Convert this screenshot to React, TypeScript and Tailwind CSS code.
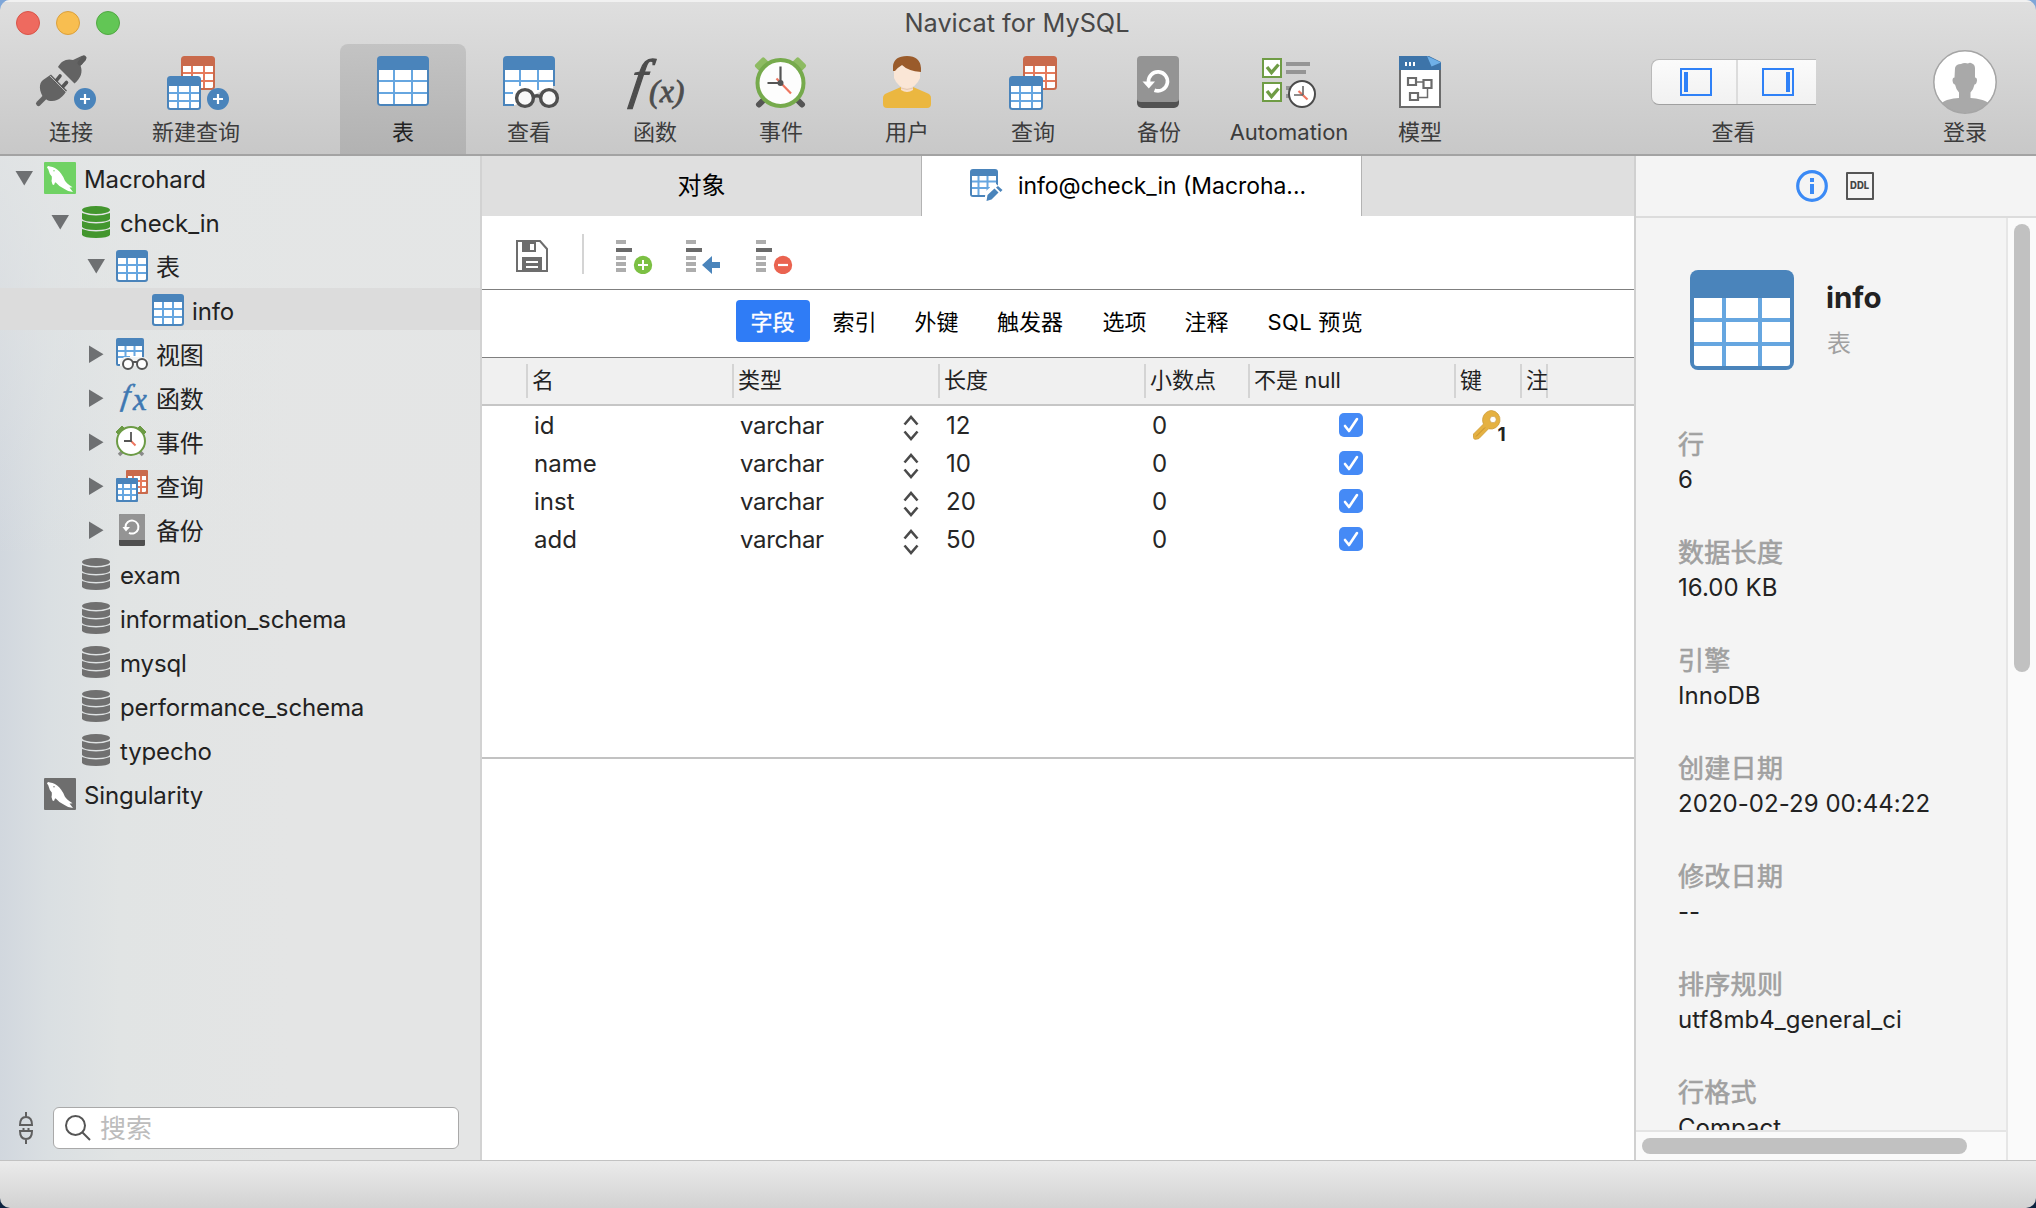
import React from "react";

type Box = { x?: number; y?: number };

/* ---------- shared drawings ---------- */

const BLUE = "#4a84bb";
const BLUE_LINE = "#66a6e0";
const RED = "#c96a4c";
const RED_LINE = "#e57a5c";

type GridProps = Box & {
  w: number;
  h: number;
  head: number;
  cols: [number, number];
  rows: [number, number];
  r?: number;
  b?: number;
  color?: string;
  line?: string;
};

function Grid({ x = 0, y = 0, w, h, head, cols, rows, r = 3, b = 2, color = BLUE, line = BLUE_LINE }: GridProps) {
  return (
    <g transform={`translate(${x} ${y})`}>
      <rect width={w} height={h} rx={r} fill={color} />
      <path
        d={`M${b} ${head}H${w - b}V${h - b - 1.5}Q${w - b} ${h - b} ${w - b - 1.5} ${h - b}H${b + 1.5}Q${b} ${h - b} ${b} ${h - b - 1.5}Z`}
        fill="#fff"
      />
      {cols.map((c) => (
        <rect key={c} x={c} y={head} width={2} height={h - b - head} fill={line} />
      ))}
      {rows.map((c) => (
        <rect key={c} x={b} y={c} width={w - 2 * b} height={2} fill={line} />
      ))}
    </g>
  );
}

const LargeGrid = (p: Box) => <Grid {...p} w={52} h={50} head={14} cols={[16, 34]} rows={[24, 36]} r={4} />;

function QueryPair({ x }: { x: number }) {
  return (
    <>
      <Grid x={x + 14} y={12} w={34} h={34} head={10} cols={[10, 22]} rows={[16, 24]} color={RED} line={RED_LINE} r={3.5} />
      <Grid x={x} y={32} w={34} h={34} head={10} cols={[10, 22]} rows={[16, 24]} r={3.5} />
    </>
  );
}

function PlusBadge({ cx, cy }: { cx: number; cy: number }) {
  return (
    <>
      <circle cx={cx} cy={cy} r={11} fill={BLUE} />
      <path d={`M${cx - 5} ${cy}h10M${cx} ${cy - 5}v10`} stroke="#fff" strokeWidth={2.2} />
    </>
  );
}

/* ---------- main toolbar icons: 66px tall canvas over the whole item width ---------- */

const ConnectIcon = () => (
  <svg width={142} height={66} viewBox="0 0 142 66" className="block">
    <g fill="#636363">
      <path d="M58 23C61 17 67 14 73 16L82 11.8L83.5 12L86 15L85.5 16.5L80.5 21.5C83 28 81 34 74.5 39.5Z" />
      <path d="M80 19L84 14" stroke="#5a5a5a" strokeWidth={5} strokeLinecap="round" />
      <path d="M51 30.5L67 46.5C63 52 58 59 48 56.5L44 54C39 48 38.500 39 43 36Z" />
      <path d="M38.500 59.500L44 54" stroke="#636363" strokeWidth={5} strokeLinecap="round" />
      <path d="M56 37L60 32M62.500 43L66.500 38.500" stroke="#555" strokeWidth={3.6} strokeLinecap="round" />
    </g>
    <path d="M50 32L66 48" stroke="#d0d0d0" strokeWidth={0.8} />
    <PlusBadge cx={85} cy={55} />
  </svg>
);

const NewQueryIcon = () => (
  <svg width={108} height={66} viewBox="142 0 108 66" className="block">
    <QueryPair x={167} />
    <PlusBadge cx={218} cy={55} />
  </svg>
);

const TableToolIcon = () => (
  <svg width={126} height={66} viewBox="0 0 126 66" className="block">
    <LargeGrid x={37} y={12} />
  </svg>
);

const ViewIcon = () => (
  <svg width={126} height={66} viewBox="0 0 126 66" className="block">
    <path d="M37 16q0-4 4-4h44q4 0 4 4v26h-2V26H39v34h8v2h-7q-3 0-3-3z" fill={BLUE} />
    <path d="M39 26h48v19l-8 0l-30 16h-10z" fill="#fff" />
    <path d="M39 37h48M54 26v16M72 26v20M39 49h8" stroke={BLUE_LINE} strokeWidth={2} />
    <path d="M38 25v36h10" fill="none" stroke={BLUE} strokeWidth={2} />
    <circle cx={59} cy={54} r={8.400} fill="#f8f8f8" stroke="#4f4f4f" strokeWidth={3.400} />
    <circle cx={83} cy={54} r={8.400} fill="#f8f8f8" stroke="#4f4f4f" strokeWidth={3.400} />
    <path d="M67 53q4-2.500 8 0" fill="none" stroke="#4f4f4f" strokeWidth={3.400} />
  </svg>
);

const FunctionIcon = () => (
  <svg width={126} height={66} viewBox="0 0 126 66" className="block">
    <g fill="#4d4d4d" stroke="#4d4d4d" fontFamily="Liberation Serif" fontStyle="italic">
      <text transform="translate(37 52.500) skewX(-9)" fontSize={54} strokeWidth={1.4}>f</text>
      <text x={57} y={58} fontSize={32} strokeWidth={0.8}>(x)</text>
    </g>
  </svg>
);

const EventIcon = () => (
  <svg width={126} height={66} viewBox="0 0 126 66" className="block">
    <path d="M41 60.500L48 53.500M84 60.500L77 53.500" stroke="#555" strokeWidth={6} strokeLinecap="round" />
    <g fill="#8ebb62">
      <rect x={-6.500} y={-4} width={13} height={9} rx={2} transform="translate(43.500 20) rotate(-45)" />
      <rect x={-6.500} y={-4} width={13} height={9} rx={2} transform="translate(81.500 20) rotate(45)" />
    </g>
    <circle cx={62.500} cy={39} r={23} fill="#fdfdfd" stroke="#76aa4c" strokeWidth={4} />
    <path d="M58.500 34.500L73 49.500" stroke="#ee7660" strokeWidth={2.200} />
    <path d="M62.500 22.500V39H49.500" fill="none" stroke="#555" strokeWidth={2.200} />
    <circle cx={62.500} cy={39} r={3} fill="#555" />
  </svg>
);

const UserIcon = () => (
  <svg width={126} height={66} viewBox="0 0 126 66" className="block">
    <path d="M39 54q0-3 3-4.500L57 43h12l15 6.500q3 1.500 3 4.500v6q0 4-4 4H43q-4 0-4-4z" fill="#ebb740" />
    <path d="M57 43v3q6 4 12 0v-3z" fill="#f8dfcb" />
    <path d="M50 26V34Q54 44 63 44T76 34V26L60 20z" fill="#fae6d6" />
    <path d="M57 44q6 3 12 0" fill="none" stroke="#e3c9b4" strokeWidth={1} />
    <path d="M49 27V22Q50 12 63 12T77 24V28Q64 27 58 21Q53 24 51 27z" fill="#9a5b2b" />
  </svg>
);

const QueryIcon = () => (
  <svg width={126} height={66} viewBox="970 0 126 66" className="block">
    <QueryPair x={1009} />
  </svg>
);

const BackupIcon = () => (
  <svg width={126} height={66} viewBox="0 0 126 66" className="block">
    <rect x={41} y={14} width={42} height={50} rx={5} fill="#525252" />
    <path d="M41 16q0-4 4-4h34q4 0 4 4v39q0 3-4 3H45q-4 0-4-3z" fill="#949494" />
    <path d="M52.500 38A9.500 9.500 0 1 1 58.500 46.200" fill="none" stroke="#fff" strokeWidth={3.600} />
    <path d="M46.500 37.500H59L52.800 44.500z" fill="#fff" />
  </svg>
);

const AutomationIcon = () => (
  <svg width={134} height={66} viewBox="0 0 134 66" className="block">
    {[15, 39].map((y) => (
      <g key={y}>
        <rect x={41} y={y} width={18} height={18} fill="#fff" stroke="#6f9c45" strokeWidth={2} />
        <path d={`M45 ${y + 8}l4.500 5.500l7-8`} fill="none" stroke="#6f9c45" strokeWidth={3.400} />
      </g>
    ))}
    <path d="M64 20h24M64 28h20M64 44h8M64 52h8" stroke="#959595" strokeWidth={4} />
    <circle cx={80} cy={50} r={13} fill="#fff" stroke="#4b4b4b" strokeWidth={2} />
    <path d="M76.500 47L85.500 55.500" stroke="#ee7660" strokeWidth={2.200} />
    <path d="M81 42v9M72 51h9" stroke="#666" strokeWidth={1.600} />
  </svg>
);

const ModelIcon = () => (
  <svg width={128} height={66} viewBox="0 0 128 66" className="block">
    <path d="M43 12h28l14 7v45H43z" fill="#fff" />
    <path d="M44 26v37h40V26" fill="none" stroke="#6b6b6b" strokeWidth={2} />
    <path d="M43 12h30l12 6v8H43z" fill="#3d74a9" />
    <path d="M71 12L85 18.500L75.500 22.500z" fill="#6fb0e8" />
    <path d="M50 18v4M54 18v4M58 18v4" stroke="#fff" strokeWidth={2} />
    <g fill="none" stroke="#6b6b6b" strokeWidth={2.200}>
      <path d="M52 34h8v7h-8zM67.500 36h8v8h-8zM54 49h8v7h-8z" />
      <path d="M60 38h7M62 53.500h9.500V44" strokeWidth={1.500} />
    </g>
  </svg>
);

/* ---------- tree icons: 32x32 ---------- */

const SmallTable = () => (
  <svg width={32} height={32} className="shrink-0">
    <Grid w={32} h={32} head={8} cols={[10, 20]} rows={[14, 22]} r={3} />
  </svg>
);

const SmallView = () => (
  <svg width={32} height={32} className="shrink-0">
    <path d="M0 2q0-2 2-2h24q2 0 2 2v18l-22 2v6H2q-2 0-2-2z" fill={BLUE} />
    <path d="M2 8h24v12l-12 0l-8 6H2z" fill="#fff" />
    <path d="M2 13h24M2 19h12M9.500 8v10M18.500 8v10" stroke={BLUE_LINE} strokeWidth={2} />
    <path d="M4 28v-5l4-4h18q4 0 6 3v6z" fill="#f2f3f3" />
    <g fill="#fff" stroke="#555" strokeWidth={2}>
      <circle cx={12} cy={26} r={5} />
      <circle cx={26} cy={26} r={5} />
      <path d="M16.500 24h5" />
    </g>
  </svg>
);

const SmallFunction = () => (
  <svg width={32} height={32} className="shrink-0 overflow-visible">
    <g fill="#3e78b2" stroke="#3e78b2" strokeWidth={0.6} fontFamily="Liberation Serif" fontStyle="italic">
      <text transform="translate(4.500 22.500) skewX(-8)" fontSize={30}>f</text>
      <text x={17} y={27.500} fontSize={31}>x</text>
    </g>
  </svg>
);

const SmallEvent = () => (
  <svg width={32} height={32} className="shrink-0">
    <path d="M3 29l4-4M27 29l-4-4" stroke="#8a8a8a" strokeWidth={3.500} />
    <path d="M0 6L6 0L9 3L3 9zM30 6L24 0L21 3L27 9z" fill="#6c9b45" stroke="#6c9b45" strokeLinejoin="round" />
    <circle cx={15} cy={15} r={14} fill="#fff" stroke="#6c9b45" strokeWidth={2} />
    <path d="M14 14l5.500 5.500" stroke="#ee7660" strokeWidth={2} />
    <path d="M15 6v9H8" fill="none" stroke="#555" strokeWidth={1.800} />
  </svg>
);

const SmallQuery = () => (
  <svg width={32} height={32} className="shrink-0">
    <Grid x={10} y={0} w={22} h={24} head={6} cols={[6, 14]} rows={[10, 16]} r={1} color={RED} line={RED_LINE} />
    <Grid x={0} y={8} w={22} h={24} head={6} cols={[6, 14]} rows={[10, 16]} r={1} />
  </svg>
);

const SmallBackup = () => (
  <svg width={32} height={32} className="shrink-0">
    <rect x={3} y={0} width={26} height={32} rx={1.500} fill="#4f4f4f" />
    <path d="M3 1.500q0-1.500 1.500-1.500h23q1.500 0 1.500 1.500V26H3z" fill="#949494" />
    <path d="M9.500 13A6.500 6.500 0 1 1 13 18.800" fill="none" stroke="#fff" strokeWidth={2} />
    <path d="M6.500 13h7.500l-4 4.500z" fill="#fff" />
  </svg>
);

const Database = ({ color }: { color: string }) => (
  <svg width={32} height={32} className="shrink-0" fill={color}>
    <ellipse cx={16} cy={4} rx={14} ry={4} />
    <path d="M2 7q14 5 28 0v6q-2 3-14 3t-14-3z" />
    <path d="M2 15q14 5 28 0v6q-2 3-14 3t-14-3z" />
    <path d="M2 23q14 5 28 0v6q-2 3-14 3t-14-3z" />
  </svg>
);

const Dolphin = ({ color }: { color: string }) => (
  <svg width={32} height={32} className="shrink-0">
    <rect width={32} height={32} rx={1} fill={color} />
    <path
      d="M3 5.500Q3.500 3 6 4.500L8.500 5Q13.500 6.500 17 11.500Q20 15.500 20.800 18.500Q22 21 28.500 25.200Q26.500 25.300 25.500 25.600L29 30Q23.500 29.500 20.500 27Q15.500 25 11.800 20.500L11 20.500L10 23L8.500 22.500L7.500 19Q8 16.500 7.800 14.500Q5.500 12.500 5 9.500Q4.500 7 3 5.500Z"
      fill="#fff"
    />
    <circle cx={10} cy={8.800} r={0.7} fill={color} />
  </svg>
);

/* ---------- window header ---------- */

function ToolItem({ w, label, active, children }: { w: string; label: string; active?: boolean; children: React.ReactNode }) {
  return (
    <div
      className={`${w} flex h-[110px] shrink-0 flex-col items-center text-[22px] leading-[45px] *:shrink-0 ${
        active ? "rounded-t-lg bg-gradient-to-b from-[#c3c3c3] to-[#b2b2b2] text-[#222]" : "text-[#3c3c3c]"
      }`}
    >
      {children}
      <span className="whitespace-nowrap">{label}</span>
    </div>
  );
}

function Header() {
  return (
    <header className="flex h-[156px] shrink-0 flex-col border-b-2 border-[#a3a3a3] bg-gradient-to-b from-[#dfdfdf] to-[#c8c8c8] shadow-[inset_0_2px_0_#f1f1f1]">
      <div className="grid h-11 grid-cols-[1fr_auto_1fr] items-center">
        <div className="flex gap-4 pl-4">
          <i className="size-6 rounded-full border border-[#d95448] bg-[#ee6a5f]" />
          <i className="size-6 rounded-full border border-[#dba03c] bg-[#f8be50]" />
          <i className="size-6 rounded-full border border-[#51a843] bg-[#62c655]" />
        </div>
        <h1 className="pt-px pr-0.5 text-[25.300px] leading-[44px] text-[#484848]">Navicat for MySQL</h1>
      </div>
      <div className="flex">
        <ToolItem w="w-[142px]" label="连接"><ConnectIcon /></ToolItem>
        <ToolItem w="w-[108px]" label="新建查询"><NewQueryIcon /></ToolItem>
        <div className="w-[90px]" />
        <ToolItem w="w-[126px]" label="表" active><TableToolIcon /></ToolItem>
        <ToolItem w="w-[126px]" label="查看"><ViewIcon /></ToolItem>
        <ToolItem w="w-[126px]" label="函数"><FunctionIcon /></ToolItem>
        <ToolItem w="w-[126px]" label="事件"><EventIcon /></ToolItem>
        <ToolItem w="w-[126px]" label="用户"><UserIcon /></ToolItem>
        <ToolItem w="w-[126px]" label="查询"><QueryIcon /></ToolItem>
        <ToolItem w="w-[126px]" label="备份"><BackupIcon /></ToolItem>
        <ToolItem w="w-[134px]" label="Automation"><AutomationIcon /></ToolItem>
        <ToolItem w="w-[128px]" label="模型"><ModelIcon /></ToolItem>
        <div className="flex-1" />
        <ToolItem w="w-[165px]" label="查看">
          <div className="flex h-[66px] w-full pt-[15px]">
            <div className="flex h-[46px] w-full overflow-hidden rounded-l-lg border border-r-0 border-[#b9b9b9] border-b-[#a0a0a0] bg-gradient-to-b from-[#fbfbfb] to-[#f1f1f1]">
              <div className="flex w-[86px] items-center border-r-2 border-[#dcdcdc] pl-7">
                <svg width={32} height={28}><path d="M1 1h30v26H1z" fill="none" stroke="#2f81f7" strokeWidth={2} /><path d="M4 4h4v20H4z" fill="#2f81f7" /></svg>
              </div>
              <div className="flex items-center pl-6">
                <svg width={32} height={28}><path d="M1 1h30v26H1z" fill="none" stroke="#2f81f7" strokeWidth={2} /><path d="M24 4h4v20h-4z" fill="#2f81f7" /></svg>
              </div>
            </div>
          </div>
        </ToolItem>
        <div className="w-[99px]" />
        <ToolItem w="w-[100px]" label="登录">
          <svg width={100} height={66} viewBox="0 0 100 66" className="block overflow-visible">
            <clipPath id="avatar"><circle cx={50} cy={38} r={31} /></clipPath>
            <circle cx={50} cy={38} r={31} fill="#fff" />
            <path
              d="M40 24q1-4 6-4q3-1.500 7-.5q2-1.500 4 0q3 1 3 5v9q2 0 2 3q-.5 4-2.500 4q-1 5-4 8v5.500q5 0 12 2q6 2 6 4v10H26V60q1-2 6-4q7-2 12-2v-5.500q-3-3-4-8q-2 0-2.500-4q0-3 2-3z"
              fill="#a9a9a9"
              clipPath="url(#avatar)"
            />
            <circle cx={50} cy={38} r={31.200} fill="none" stroke="#a5a5a5" strokeWidth={1.500} />
          </svg>
        </ToolItem>
        <div className="w-[21px]" />
      </div>
    </header>
  );
}

/* ---------- sidebar ---------- */

type Arrow = "down" | "right" | null;

const TREE: { label: string; pad: string; arrow: Arrow; icon: React.ReactNode; selected?: boolean }[] = [
  { label: "Macrohard", pad: "pl-2", arrow: "down", icon: <Dolphin color="#70d264" /> },
  { label: "check_in", pad: "pl-11", arrow: "down", icon: <Database color="#43962e" /> },
  { label: "表", pad: "pl-20", arrow: "down", icon: <SmallTable /> },
  { label: "info", pad: "pl-[116px]", arrow: null, icon: <SmallTable />, selected: true },
  { label: "视图", pad: "pl-20", arrow: "right", icon: <SmallView /> },
  { label: "函数", pad: "pl-20", arrow: "right", icon: <SmallFunction /> },
  { label: "事件", pad: "pl-20", arrow: "right", icon: <SmallEvent /> },
  { label: "查询", pad: "pl-20", arrow: "right", icon: <SmallQuery /> },
  { label: "备份", pad: "pl-20", arrow: "right", icon: <SmallBackup /> },
  { label: "exam", pad: "pl-11", arrow: null, icon: <Database color="#707070" /> },
  { label: "information_schema", pad: "pl-11", arrow: null, icon: <Database color="#707070" /> },
  { label: "mysql", pad: "pl-11", arrow: null, icon: <Database color="#707070" /> },
  { label: "performance_schema", pad: "pl-11", arrow: null, icon: <Database color="#707070" /> },
  { label: "typecho", pad: "pl-11", arrow: null, icon: <Database color="#707070" /> },
  { label: "Singularity", pad: "pl-2", arrow: null, icon: <Dolphin color="#6e6e6e" /> },
];

function Sidebar() {
  return (
    <aside className="flex w-[482px] shrink-0 flex-col border-r-2 border-[#d2d2d2] bg-[linear-gradient(to_bottom,#e4e6e6cc,transparent_40%),linear-gradient(to_right,#d1d7de,#dadfe2_10%,#e1e4e4_25%,#e4e5e5_60%)]">
      <ul className="flex-1 text-2xl text-[#222]">
        {TREE.map((n) => (
          <li key={n.label + n.pad} className="h-11">
            <div className={`flex h-[42px] items-center pt-0.5 ${n.pad} ${n.selected ? "bg-[#dcdcdc]" : ""}`}>
              <svg width={36} height={32} className="shrink-0" fill="#6e7072">
                {n.arrow === "down" && <path d="M7.500 9h17.500l-8.750 14.500z" />}
                {n.arrow === "right" && <path d="M9 7.500v17.500l14.500-8.750z" />}
              </svg>
              {n.icon}
              <span className="pt-[3px] pl-2 leading-8 tracking-[-0.13px]">{n.label}</span>
            </div>
          </li>
        ))}
      </ul>
      <div className="mb-[11px] flex h-[42px] items-center pl-[19px]">
        <svg width={14} height={32} fill="none" stroke="#5f5f5f" strokeWidth={2}>
          <path d="M7 0v5M1 13h12q0-8-6-8T1 13zM4.500 19v-3M9.500 19v-3M1 19h12q0 8-6 8T1 19zM7 27v5" />
        </svg>
        <div className="ml-5 flex h-[42px] w-[406px] items-center rounded-md border border-[#a9a9a9] bg-white pl-[11px]">
          <svg width={26} height={26} fill="none" stroke="#555" strokeWidth={2}>
            <circle cx={10.500} cy={10.500} r={9.500} />
            <path d="M17.500 17.500l7.500 7.500" />
          </svg>
          <span className="pt-0.5 pl-[9px] text-[26px] leading-8 text-[#bcbcbc]">搜索</span>
        </div>
      </div>
    </aside>
  );
}

/* ---------- editor ---------- */

const FieldRows = () => (
  <g>
    <path d="M0 2h10M0 18h10M0 24h10M0 30h10" stroke="#adadad" strokeWidth={4} />
    <path d="M0 10h16" stroke="#6a6a6a" strokeWidth={4} />
  </g>
);

function EditorToolbar() {
  return (
    <div className="flex h-[74px] items-center border-b border-[#7f7f7f] pt-[3px] pl-[34px]">
      <svg width={32} height={32} className="mt-1 block" fill="none" stroke="#6d6d6d">
        <path d="M1 1h23l7 8v22H1z" strokeWidth={2} />
        <path d="M6 1h14v11H6zM6 17h20v14H6z" fill="#6d6d6d" stroke="none" />
        <path d="M14 4h4v6h-4zM10 21h12v2H10zM10 26h12v2H10z" fill="#fff" stroke="none" />
      </svg>
      <i className="mr-8 ml-[34px] h-10 w-0.5 bg-[#d4d4d4]" />
      <div className="flex gap-8 pt-1.5">
        <svg width={38} height={34}>
          <FieldRows />
          <circle cx={27} cy={25} r={9.200} fill="#7cc043" />
          <path d="M22 25h10M27 20v10" stroke="#fff" strokeWidth={2} />
        </svg>
        <svg width={38} height={34}>
          <FieldRows />
          <path d="M16 25l10-9v6h8v6h-8v6z" fill={BLUE} />
        </svg>
        <svg width={38} height={34}>
          <FieldRows />
          <circle cx={27} cy={25} r={9.200} fill="#ea6350" />
          <path d="M22 25h10" stroke="#fff" strokeWidth={2.200} />
        </svg>
      </div>
    </div>
  );
}

const COLS = "grid grid-cols-[46px_206px_206px_206px_104px_206px_66px_26px_1fr]";

const SECTIONS = [
  { label: "索引", cls: "pr-[14.500px] pl-[13.500px]" },
  { label: "外键", cls: "px-[14.500px]" },
  { label: "触发器", cls: "pr-[16px] pl-[15px]" },
  { label: "选项", cls: "px-[14.500px]" },
  { label: "注释", cls: "px-[14.500px]" },
  { label: "SQL 预览", cls: "pl-[15.500px] tracking-[0.3px]" },
];

const FIELDS = [
  { name: "id", len: "12", key: true },
  { name: "name", len: "10", key: false },
  { name: "inst", len: "20", key: false },
  { name: "add", len: "50", key: false },
];

function KeyMark() {
  return (
    <svg width={40} height={36} viewBox="0 0 40 36" className="absolute top-[3px] left-4 overflow-visible">
      <path
        d="M19.500 1.500a9.300 9.300 0 1 1-3 18.300L7 29.500q-5.500 2-5.500-1V25L11.500 15A9.500 9.500 0 0 1 19.500 1.500z"
        fill="#e5b141"
        stroke="#cd9a35"
        strokeWidth={0.8}
      />
      <path d="M4 27.500L13 18.500" stroke="#c08a2a" strokeWidth={0.9} />
      <circle cx={21} cy={10.500} r={3.200} fill="#fff" stroke="#c4943a" strokeWidth={0.6} />
      <text x={25.500} y={32} fontFamily="Inter" fontWeight={700} fontSize={19} fill="#222">1</text>
    </svg>
  );
}

function Editor() {
  return (
    <main className="flex w-[1152px] shrink-0 flex-col bg-white text-black">
      <div className="flex h-[60px] text-2xl">
        <div className="flex w-[440px] items-center justify-center border-r border-[#b3b3b3] bg-[#dfdfdf]">对象</div>
        <div className="flex w-[439px] items-center pl-12">
          <svg width={34} height={34}>
            <path d="M0 3q0-3 3-3h22q3 0 3 3v14L16 28H3q-3 0-3-3z" fill={BLUE} />
            <path d="M2 7h24v12l-8 7H2z" fill="#fff" />
            <path d="M2 12.500h24M2 19h18M8.500 7v19M17.500 7v16" stroke={BLUE_LINE} strokeWidth={2} />
            <path d="M14 33l2-11l9-8l9 8l-6 8z" fill="#fff" />
            <path d="M16.500 32l1-6l7-6.500l4 4l-7 7z M26 18.500l2-1.500l4.500 4l-2 2z" fill={BLUE} />
          </svg>
          <span className="pl-[14px] text-[22.900px]">info@check_in (Macroha...</span>
        </div>
        <div className="flex-1 border-l border-[#b3b3b3] bg-[#dfdfdf]" />
      </div>
      <EditorToolbar />
      <nav className="flex h-[68px] items-center gap-[9px] border-b border-[#7f7f7f] pb-[5px] pl-[254px] text-[22px]">
        <span className="flex h-[42px] items-center rounded bg-[#2f7cf6] pt-0.5 pr-[15.500px] pl-[14.500px] text-white [-webkit-text-stroke:0.4px_#fff]">字段</span>
        {SECTIONS.map((s) => (
          <span key={s.label} className={`pt-0.5 whitespace-nowrap ${s.cls}`}>{s.label}</span>
        ))}
      </nav>
      <div className={`${COLS} h-12 border-b-2 border-[#c6c6c6] bg-[#f0f0f0] pt-1.5 text-[22px] leading-[32px] text-[#222]`}>
        {["", "名", "类型", "长度", "小数点", "不是 null", "键", "注", ""].map((t, i) => (
          <div key={i} className={`h-[34px] whitespace-nowrap ${i < 8 ? "border-r-2 border-[#d4d4d4]" : ""} pl-1`}>{t}</div>
        ))}
      </div>
      <div className="h-[353px] border-b-2 border-[#c2c2c2] text-2xl text-[#262626]">
        {FIELDS.map((f) => (
          <div key={f.name} className={`${COLS} h-[38px] leading-10`}>
            <span />
            <span className="pl-1.5">{f.name}</span>
            <span className="flex items-center justify-between pr-[21px] pl-1.5 tracking-[-0.3px]">
              varchar
              <svg width={16} height={26} className="mt-1" fill="none" stroke="#4a4a4a" strokeWidth={2.600}>
                <path d="M1.500 9.500L8 2l6.500 7.500M1.500 16.500L8 24l6.500-7.500" />
              </svg>
            </span>
            <span className="pl-1.5">{f.len}</span>
            <span className="pl-1.5">0</span>
            <span className="flex h-[38px] items-center justify-center pr-[5px]">
              <svg width={24} height={24}>
                <rect width={24} height={24} rx={5} fill="#458af6" />
                <path d="M6 13l4 5l8-12" fill="none" stroke="#fff" strokeWidth={2.600} strokeLinecap="round" strokeLinejoin="round" />
              </svg>
            </span>
            <span className="relative">{f.key && <KeyMark />}</span>
          </div>
        ))}
      </div>
    </main>
  );
}

/* ---------- information panel ---------- */

const INFO = [
  ["行", "6"],
  ["数据长度", "16.00 KB"],
  ["引擎", "InnoDB"],
  ["创建日期", "2020-02-29 00:44:22"],
  ["修改日期", "--"],
  ["排序规则", "utf8mb4_general_ci"],
  ["行格式", "Compact"],
];

function InfoPanel() {
  return (
    <section className="flex flex-1 flex-col border-l-2 border-[#d0d0d0] bg-[#f4f4f4]">
      <div className="flex h-[62px] items-center justify-center gap-[18px] border-b-2 border-[#dcdcdc] pr-0.5">
        <svg width={32} height={32}>
          <circle cx={16} cy={16} r={14.300} fill="none" stroke="#3b8af5" strokeWidth={3.200} />
          <path d="M14 8h4v4h-4zM14 14h4v10h-4z" fill="#3b8af5" />
        </svg>
        <div className="flex size-7 items-center justify-center rounded-[1px] border-2 border-[#555] text-[10.500px] leading-none font-extrabold text-[#444]">
          <span className="scale-x-90">DDL</span>
        </div>
      </div>
      <div className="flex h-[942px]">
        <div className="flex flex-1 flex-col">
          <div className="h-[914px] overflow-hidden border-b-2 border-[#e4e4e4]">
            <div className="flex pt-[52px] pl-[54px]">
              <svg width={104} height={100} viewBox="0 0 52 50"><LargeGrid /></svg>
              <div className="pt-[7px] pl-8">
                <div className="text-[29.500px] leading-10 font-bold text-[#222]">info</div>
                <div className="pt-[9px] pl-px text-2xl leading-9 text-[#a0a0a0]">表</div>
              </div>
            </div>
            <dl className="pt-[57px] pl-[42px]">
              {INFO.map(([k, v]) => (
                <div key={k} className="h-[108px]">
                  <dt className="text-[26px] leading-9 tracking-[0.3px] text-[#a0a0a0] [-webkit-text-stroke:0.6px_#a0a0a0]">{k}</dt>
                  <dd className="text-2xl leading-[34px] tracking-[0.05px] text-[#222]">{v}</dd>
                </div>
              ))}
            </dl>
          </div>
          <div className="flex flex-1 bg-[#fafafa] pt-1.5 pl-1.5">
            <i className="h-4 w-[325px] rounded-full bg-[#c1c1c1]" />
          </div>
        </div>
        <div className="w-[30px] border-l-2 border-[#e6e6e6] bg-[#fafafa] pt-1.5 pl-1.5">
          <i className="block h-[448px] w-4 rounded-full bg-[#c1c1c1]" />
        </div>
      </div>
    </section>
  );
}

export default function App() {
  return (
    <div className="h-[1208px] w-[2036px] overflow-hidden bg-[#12294a] bg-gradient-to-b from-[#7ea6d8] from-10% to-[#0c2340] to-90%">
      <div className="flex h-full flex-col overflow-hidden rounded-[10px] font-['Inter','Noto_Sans_CJK_SC',sans-serif]">
        <Header />
        <div className="flex h-[1004px] shrink-0">
          <Sidebar />
          <Editor />
          <InfoPanel />
        </div>
        <footer className="flex-1 border-t border-[#c2c2c2] bg-gradient-to-b from-[#ebebeb] to-[#d2d2d2]" />
      </div>
    </div>
  );
}
